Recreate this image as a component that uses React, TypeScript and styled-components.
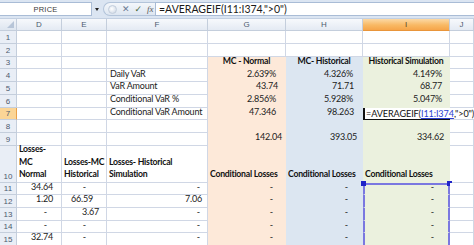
import React from 'react';
import styled, { createGlobalStyle, css } from 'styled-components';

const GlobalStyle = createGlobalStyle`
  body {
    margin: 0;
    background: #ffffff;
    font-family: Lato, 'Liberation Sans', sans-serif;
  }
`;

type Fill = 'none' | 'peach' | 'blue' | 'green';
type Align = 'left' | 'right' | 'center';

const fills: Record<Fill, string> = {
  none: '#ffffff',
  peach: '#fde9d9',
  blue: '#dce6f1',
  green: '#ebf1de',
};

const GRID = '#d0d7e5';

type CellSpec = {
  text?: React.ReactNode;
  align?: Align;
  bold?: boolean;
  pad?: number;
};

const r = (text: string, pad: number): CellSpec => ({ text, align: 'right', pad });
const l = (text: React.ReactNode, bold = false): CellSpec => ({ text, align: 'left', bold, pad: bold ? 2 : 3 });
const c = (text: string): CellSpec => ({ text, align: 'center', bold: true });
const E: CellSpec = {};

// columns D E F G H I J
const rows: CellSpec[][] = [
  [E, E, E, E, E, E, E],
  [E, E, E, E, E, E, E],
  [E, E, E, c('MC - Normal'), c('MC- Historical'), c('Historical Simulation'), E],
  [E, E, l('Daily VaR'), r('2.639%', 9), r('4.326%', 9), r('4.149%', 7), E],
  [E, E, l('VaR Amount'), r('43.74', 7), r('71.71', 8), r('68.77', 7), E],
  [E, E, l('Conditional VaR %'), r('2.856%', 9), r('5.928%', 9), r('5.047%', 7), E],
  [E, E, l('Conditional VaR Amount'), r('47.346', 9), r('98.263', 8), E, E],
  [E, E, E, E, E, E, E],
  [E, E, E, r('142.04', 3), r('393.05', 5), r('334.62', 5), E],
  [
    l(<>Losses-<br />MC<br />Normal</>, true),
    l(<>Losses-MC<br />Historical</>, true),
    l(<>Losses- Historical<br />Simulation</>, true),
    l('Conditional Losses', true),
    l('Conditional Losses', true),
    l('Conditional Losses', true),
    E,
  ],
  [r('34.64', 8), r('-', 20), r('-', 7), r('-', 12), r('-', 14), r('-', 14), E],
  [r('1.20', 8), r('66.59', 13), r('7.06', 5), r('-', 12), r('-', 14), r('-', 14), E],
  [r('-', 14), r('3.67', 7), r('-', 7), r('-', 12), r('-', 14), r('-', 14), E],
  [r('-', 14), r('-', 20), r('-', 7), r('-', 12), r('-', 14), r('-', 14), E],
  [r('32.74', 8), r('-', 20), r('-', 7), r('-', 12), r('-', 14), r('-', 14), E],
];

const columns = ['D', 'E', 'F', 'G', 'H', 'I', 'J'];
const colFill: Fill[] = ['none', 'none', 'none', 'peach', 'blue', 'green', 'none'];

function App() {
  return (
    <>
      <GlobalStyle />
      <Sheet>
        <FormulaBar>
          <NameBox>PRICE</NameBox>
          <DropArrow />
          <Buttons>
            <Dot />
            <BarButton $color="#6b7a93">✕</BarButton>
            <BarButton $color="#4b6a3a">✓</BarButton>
            <Fx>fx</Fx>
          </Buttons>
          <FormulaInput>=AVERAGEIF(I11:I374,"&gt;0")</FormulaInput>
        </FormulaBar>

        <Grid>
          <Corner>
            <CornerMark />
          </Corner>
          {columns.map(col => (
            <ColHeader key={col} $active={col === 'I'}>
              {col}
            </ColHeader>
          ))}

          {rows.map((cells, ri) => {
            const rowNo = ri + 1;
            return (
              <React.Fragment key={rowNo}>
                <RowHeader $active={rowNo === 7}>{rowNo}</RowHeader>
                {cells.map((cell, ci) => {
                  const fill: Fill = rowNo >= 3 ? colFill[ci] : 'none';
                  const isEdit = rowNo === 7 && columns[ci] === 'I';
                  const inRange = columns[ci] === 'I' && rowNo >= 11;
                  if (isEdit) {
                    return (
                      <EditCell key={ci}>
                        <EditText>
                          =AVERAGEIF(<Ref>I11:I374</Ref>,"&gt;0")
                        </EditText>
                      </EditCell>
                    );
                  }
                  return (
                    <Cell
                      key={ci}
                      $fill={fill}
                      $align={cell.align || 'left'}
                      $bold={!!cell.bold}
                      $pad={cell.pad ?? 3}
                      $range={inRange}
                      $rangeTop={inRange && rowNo === 11}
                    >
                      {cell.text}
                      {inRange && rowNo === 11 && (
                        <>
                          <Handle $side="left" />
                          <Handle $side="right" />
                        </>
                      )}
                    </Cell>
                  );
                })}
              </React.Fragment>
            );
          })}
        </Grid>
      </Sheet>
    </>
  );
}

const Sheet = styled.div`
  width: 474px;
  height: 245px;
  overflow: hidden;
  background: #ffffff;
`;

const FormulaBar = styled.div`
  display: flex;
  align-items: stretch;
  height: 19px;
  box-sizing: border-box;
  padding: 2px 0 2px 0;
  background: #dbe5f2;
  border-bottom: 1px solid #c3d0e2;
`;

const NameBox = styled.div`
  width: 92px;
  box-sizing: border-box;
  background: #ffffff;
  border: 1px solid #a9bcd6;
  border-left: none;
  display: flex;
  align-items: center;
  justify-content: center;
  font-family: 'Liberation Sans', sans-serif;
  font-size: 7.5px;
  color: #3a3a3a;
  letter-spacing: 0.2px;
`;

const DropArrow = styled.div`
  width: 0;
  height: 0;
  margin: 6px 4px 0 3px;
  border-left: 2.5px solid transparent;
  border-right: 2.5px solid transparent;
  border-top: 3px solid #222;
`;

const Buttons = styled.div`
  display: flex;
  align-items: center;
  gap: 5px;
  width: 52px;
  box-sizing: border-box;
  padding-left: 4px;
  background: linear-gradient(#f4f7fb, #dde6f1);
  border: 1px solid #b3c4da;
  border-right: none;
  border-radius: 8px 0 0 8px;
`;

const Dot = styled.div`
  width: 7px;
  height: 7px;
  border-radius: 50%;
  background: radial-gradient(circle at 40% 40%, #ffffff, #c8d3e2);
  border: 1px solid #c2cddc;
`;

const BarButton = styled.span<{ $color: string }>`
  font-family: 'DejaVu Sans', sans-serif;
  font-size: 9px;
  font-weight: bold;
  color: ${p => p.$color};
  line-height: 1;
`;

const Fx = styled.span`
  font-family: 'Liberation Serif', serif;
  font-style: italic;
  font-size: 9px;
  color: #5a5a5a;
`;

const FormulaInput = styled.div`
  flex: 1;
  background: #ffffff;
  border: 1px solid #a9bcd6;
  border-right: none;
  display: flex;
  align-items: center;
  padding-left: 3px;
  font-size: 10.5px;
  color: #1a1a1a;
  white-space: nowrap;
`;

const Grid = styled.div`
  display: grid;
  grid-template-columns: 17px 45px 45px 101px 78px 77px 87px 1fr;
  grid-template-rows: 12px repeat(9, 12.75px) 37px repeat(5, 12.6px);
  font-size: 9px;
  letter-spacing: -0.2px;
  color: #111;
`;

const headerBase = css`
  display: flex;
  align-items: center;
  justify-content: center;
  box-sizing: border-box;
  font-family: 'Liberation Sans', sans-serif;
  font-size: 8px;
  letter-spacing: 0;
  color: #4c5a6e;
  border-right: 1px solid #c4cedc;
  border-bottom: 1px solid #c4cedc;
`;

const Corner = styled.div`
  ${headerBase};
  position: relative;
  background: linear-gradient(#f1f4f9, #dee6f0);
`;

const CornerMark = styled.div`
  position: absolute;
  right: 2px;
  bottom: 2px;
  width: 0;
  height: 0;
  border-left: 7px solid transparent;
  border-bottom: 7px solid #b7c5d8;
`;

const ColHeader = styled.div<{ $active: boolean }>`
  ${headerBase};
  background: ${p =>
    p.$active
      ? 'linear-gradient(#fbd9a6, #f8b964 55%, #f6a54a)'
      : 'linear-gradient(#f7f9fc, #e4eaf3)'};
  border-bottom-color: ${p => (p.$active ? '#e9953a' : '#c4cedc')};
  color: ${p => (p.$active ? '#5a4020' : '#4c5a6e')};
`;

const RowHeader = styled.div<{ $active: boolean }>`
  ${headerBase};
  align-items: flex-end;
  padding-bottom: 1px;
  background: ${p => (p.$active ? '#fbd596' : '#e9eef6')};
  border-right-color: ${p => (p.$active ? '#e9a14a' : '#c4cedc')};
`;

const Cell = styled.div<{
  $fill: Fill;
  $align: Align;
  $bold: boolean;
  $pad: number;
  $range: boolean;
  $rangeTop: boolean;
}>`
  position: relative;
  box-sizing: border-box;
  display: flex;
  align-items: flex-end;
  justify-content: ${p =>
    p.$align === 'right' ? 'flex-end' : p.$align === 'center' ? 'center' : 'flex-start'};
  text-align: ${p => p.$align};
  padding: 0 ${p => (p.$align === 'right' ? p.$pad : 0)}px 1px
    ${p => (p.$align === 'left' ? p.$pad : 0)}px;
  background: ${p => fills[p.$fill]};
  border-right: 1px solid ${p => (p.$fill === 'none' ? GRID : fills[p.$fill])};
  border-bottom: 1px solid ${p => (p.$fill === 'none' ? GRID : fills[p.$fill])};
  font-weight: ${p => (p.$bold ? 700 : 400)};
  font-size: ${p => (p.$bold ? '8.7px' : '9px')};
  letter-spacing: ${p => (p.$bold ? '-0.25px' : '-0.2px')};
  line-height: 12.5px;
  white-space: nowrap;
  color: ${p => (p.$bold ? '#111' : '#222')};
  ${p =>
    p.$range &&
    css`
      border-left: 2px solid #7a78e0;
      border-right: 2px solid #7a78e0;
    `}
  ${p =>
    p.$rangeTop &&
    css`
      border-top: 2px solid #7a78e0;
    `}
`;

const Handle = styled.span<{ $side: 'left' | 'right' }>`
  position: absolute;
  top: -4px;
  ${p => (p.$side === 'left' ? 'left: -4px;' : 'right: -4px;')}
  width: 5px;
  height: 5px;
  background: #1f24c8;
`;

const EditCell = styled.div`
  position: relative;
  z-index: 2;
  box-sizing: border-box;
  background: #ffffff;
  border: 2px solid #111;
  display: flex;
  align-items: center;
  overflow: visible;
`;

const EditText = styled.span`
  flex: none;
  padding-left: 1px;
  white-space: nowrap;
  background: #ffffff;
  font-size: 9.1px;
  letter-spacing: -0.1px;
  color: #111;
`;

const Ref = styled.span`
  color: #2b3fd0;
  text-decoration: underline;
`;

export default App;
